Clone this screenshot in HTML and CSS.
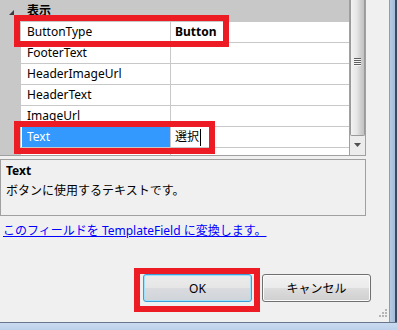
FILE: index.html
```html
<!DOCTYPE html>
<html lang="ja">
<head>
<meta charset="utf-8">
<link rel="stylesheet" href="styles.css">
</head>
<body>
<div class="window">
  <div class="client">
    <div class="pg">
      <div class="grid">
        <div class="cat">
          <span class="tri"><svg width="5" height="5" viewBox="0 0 5 5"><polygon points="5,0 5,5 0,5" fill="#3c3c3c"/></svg></span>
          <span class="cat-label">表示</span>
        </div>
        <div class="row"><div class="gut"></div><div class="name">ButtonType</div><div class="val bold">Button</div></div>
        <div class="row"><div class="gut"></div><div class="name">FooterText</div><div class="val"></div></div>
        <div class="row"><div class="gut"></div><div class="name">HeaderImageUrl</div><div class="val"></div></div>
        <div class="row"><div class="gut"></div><div class="name">HeaderText</div><div class="val"></div></div>
        <div class="row"><div class="gut"></div><div class="name">ImageUrl</div><div class="val"></div></div>
        <div class="row"><div class="gut"></div><div class="name sel">Text</div><div class="val">選択<span class="caret"></span></div></div>
        <div class="row partial"><div class="gut"></div><div class="name"></div><div class="val"></div></div>
      </div>
      <div class="vscroll">
        <div class="thumb"><span class="grip-lines"></span></div>
        <div class="down"><svg width="7" height="4" viewBox="0 0 7 4"><polygon points="0,0 7,0 3.5,4" fill="#505050"/></svg></div>
      </div>
    </div>
    <div class="desc">
      <div class="desc-title">Text</div>
      <div class="desc-text">ボタンに使用するテキストです。</div>
    </div>
    <a class="convert" href="#">このフィールドを TemplateField に変換します。</a>
    <div class="buttons">
      <button class="btn ok">OK</button>
      <button class="btn">キャンセル</button>
    </div>
    <svg class="resize" width="10" height="10" viewBox="0 0 10 10">
      <g fill="#b5b5b5">
        <rect x="8" y="0" width="2" height="2"/>
        <rect x="5" y="3" width="2" height="2"/><rect x="8" y="3" width="2" height="2"/>
        <rect x="2" y="6" width="2" height="2"/><rect x="5" y="6" width="2" height="2"/><rect x="8" y="6" width="2" height="2"/>
      </g>
    </svg>
    <div class="mark mark-1"></div>
    <div class="mark mark-2"></div>
    <div class="mark mark-3"></div>
  </div>
  <div class="frame-right"></div>
</div>
<div class="frame-bottom"></div>
</body>
</html>
```
FILE: styles.css
```css
* { box-sizing: border-box; }
html, body {
  margin: 0;
  padding: 0;
}
body {
  width: 397px;
  height: 330px;
  overflow: hidden;
  background: #f0f0f0;
  font-family: "Noto Sans", "Noto Sans CJK JP", sans-serif;
  font-size: 12px;
  color: #000;
}
.window {
  display: flex;
  height: 322px;
}
.client {
  position: relative;
  width: 389px;
  height: 322px;
  display: flex;
  flex-direction: column;
}
.frame-right {
  width: 8px;
  background: linear-gradient(to right, #8c9cb1 0, #8c9cb1 1px, #b7cbe4 1px, #a3bbd9 6px, #3b4a5e 6px, #3b4a5e 8px);
}
.frame-bottom {
  height: 8px;
  border-top: 1px solid #66758a;
  background: linear-gradient(#c9dbf0, #bcd0ea);
}

/* property grid */
.pg {
  display: flex;
  width: 366px;
  height: 156px;
  border-bottom: 1px solid #a0a0a0;
}
.grid {
  width: 350px;
  border-right: 1px solid #a0a0a0;
  background: #fff;
  overflow: hidden;
}
.cat {
  height: 22px;
  background: #c8c8c8;
  display: flex;
  align-items: center;
}
.tri {
  width: 21px;
  display: flex;
  justify-content: center;
  padding-left: 1px;
  padding-top: 2px;
}
.cat-label {
  font-weight: bold;
  padding-left: 6px;
  line-height: 22px;
}
.row {
  display: flex;
  height: 21px;
}
.gut {
  width: 21px;
  flex: none;
  background: #c8c8c8;
}
.name {
  width: 149px;
  flex: none;
  padding-left: 6px;
  line-height: 20px;
  border-bottom: 1px solid #c8c8c8;
  white-space: nowrap;
}
.name.sel {
  background: #3399ff;
  color: #fff;
  box-shadow: inset 1px 0 0 #fff;
}
.val {
  flex: 1;
  padding-left: 4px;
  line-height: 20px;
  border-left: 1px solid #c8c8c8;
  border-bottom: 1px solid #c8c8c8;
  white-space: nowrap;
  display: flex;
  align-items: center;
}
.bold { font-weight: bold; }
.caret {
  display: inline-block;
  width: 1px;
  height: 17px;
  background: #000;
  margin-left: 1px;
}
.row.partial { height: 7px; }
.row.partial .name, .row.partial .val { border-bottom: none; }

/* scrollbar */
.vscroll {
  width: 16px;
  display: flex;
  flex-direction: column;
  background: #ececec;
  border-right: 1px solid #a0a0a0;
}
.thumb {
  height: 136px;
  border: 1px solid #9a9a9a;
  border-top: none;
  border-radius: 0 0 2px 2px;
  background: linear-gradient(to right, #f3f3f3, #e6e6e6 45%, #cfcfcf 75%, #c2c2c2);
  display: flex;
  justify-content: center;
  padding-top: 58px;
}
.grip-lines {
  width: 7px;
  height: 8px;
  background: repeating-linear-gradient(#5e5e5e 0, #5e5e5e 1px, #f6f6f6 1px, #f6f6f6 2px);
}
.down {
  flex: 1;
  display: flex;
  justify-content: center;
  padding-top: 7px;
}

/* description */
.desc {
  margin-top: 3px;
  width: 366px;
  height: 57px;
  border: 1px solid #a0a0a0;
  padding: 0 5px;
}
.desc-title {
  font-weight: bold;
  line-height: 22px;
}
.desc-text {
  line-height: 18px;
}
.convert {
  align-self: flex-start;
  margin: 7px 0 0 3px;
  line-height: 16px;
  color: #0000ff;
  text-decoration: underline;
}

/* buttons */
.buttons {
  display: flex;
  justify-content: flex-end;
  gap: 10px;
  padding-right: 18px;
  margin-top: 35px;
}
.btn {
  width: 109px;
  height: 28px;
  padding: 0;
  font-family: "Noto Sans", "Noto Sans CJK JP", sans-serif;
  font-size: 12px;
  color: #000;
  border: 1px solid #707070;
  border-radius: 3px;
  background: linear-gradient(#f2f2f2 0%, #ebebeb 50%, #dddddd 50%, #cfcfcf 100%);
  box-shadow: inset 0 0 0 1px #fbfbfb;
}
.btn.ok {
  border-color: #3c9fd8;
  background: linear-gradient(#ececec 0%, #e6e6e6 50%, #d9dbdf 50%, #d0d4d9 100%);
  box-shadow: inset 0 0 0 1px #9fe0fa;
}
.resize {
  position: absolute;
  right: 2px;
  bottom: 3px;
}

/* red highlight marks */
.mark {
  position: absolute;
  border: 6px solid #ed1c24;
}
.mark-1 { left: 14px; top: 15px; width: 215px; height: 32px; }
.mark-2 { left: 14px; top: 121px; width: 201px; height: 33px; }
.mark-3 { left: 134px; top: 268px; width: 126px; height: 44px; }
```
